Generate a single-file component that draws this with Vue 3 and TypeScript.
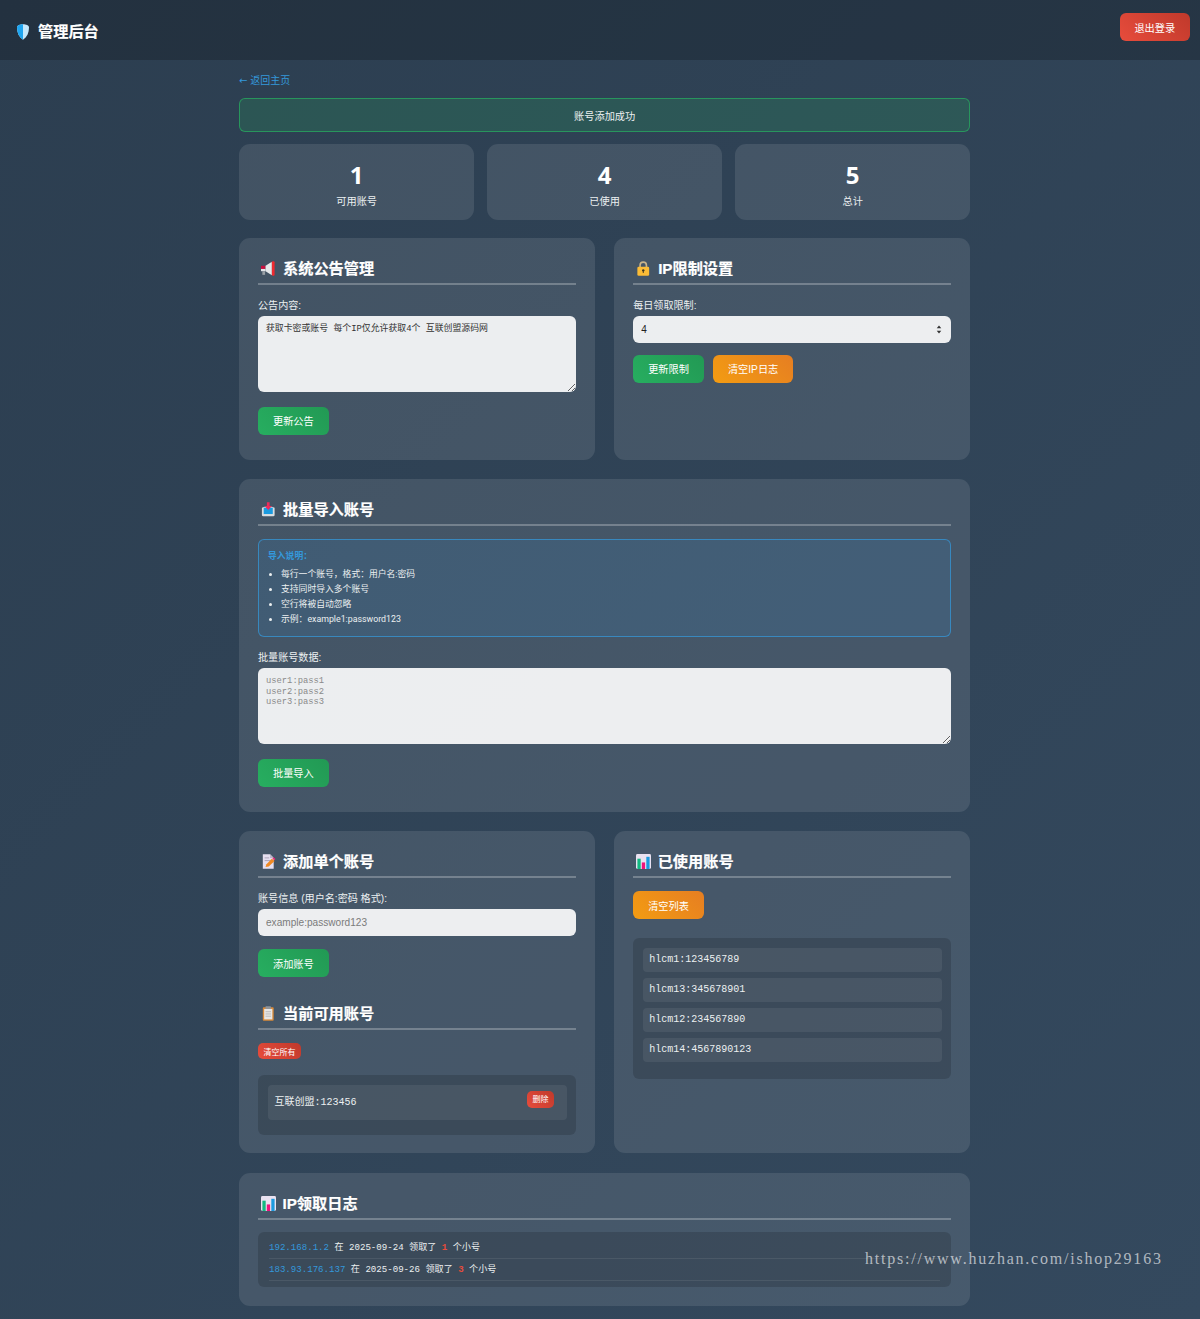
<script setup lang="ts">
const stats = [
  { value: 1, label: '可用账号' },
  { value: 4, label: '已使用' },
  { value: 5, label: '总计' },
]
const used = ['hlcm1:123456789', 'hlcm13:345678901', 'hlcm12:234567890', 'hlcm14:4567890123']
const logs = [
  { ip: '192.168.1.2', date: '2025-09-24', n: 1 },
  { ip: '183.93.176.137', date: '2025-09-26', n: 3 },
]
const notes = ['每行一个账号，格式：用户名:密码', '支持同时导入多个账号', '空行将被自动忽略', '示例：example1:password123']
</script>

<template>
  <div class="page">
    <header class="topbar">
      <h1 class="brand">
        <svg class="brand-icon" viewBox="0 0 12 16"><path d="M6 .3C9 .3 12 1.300 12 3.500 12 9 10 13 6 15.800 2 13 0 9 0 3.500 0 1.300 3 .3 6 .3z" fill="#c4e8fc"/><path d="M6 .3C3 .3 0 1.300 0 3.500 0 9 2 13 6 15.800z" fill="#1fa5f0"/></svg>
        管理后台
      </h1>
      <button class="btn red logout">退出登录</button>
    </header>

    <main class="main">
      <a class="back"><span class="arrow">←</span> 返回主页</a>
      <div class="alert">账号添加成功</div>

      <section class="stats">
        <div v-for="s in stats" :key="s.label" class="stat">
          <div class="stat-value">{{ s.value }}</div>
          <div class="stat-label">{{ s.label }}</div>
        </div>
      </section>

      <div class="two top">
        <section class="card">
          <h2 class="title">
            <svg class="ico" viewBox="0 0 16 16"><rect x="0" y="5" width="5" height="3.500" fill="#c8103f"/><rect x="0" y="8.500" width="5" height="2.500" fill="#e3e5e8"/><rect x="1.500" y="11" width="3" height="4" fill="#9aa0a6"/><path d="M5 5l7-4.500v15L5 11z" fill="#e6e8ea"/><rect x="12" y="0" width="3" height="16" rx="1.200" fill="#ee2a30"/></svg>
            系统公告管理
          </h2>
          <div class="field">
            <label class="label">公告内容:</label>
            <textarea class="control area cn">获取卡密或账号 每个IP仅允许获取4个 互联创盟源码网</textarea>
          </div>
          <button class="btn green">更新公告</button>
        </section>

        <section class="card">
          <h2 class="title">
            <svg class="ico" viewBox="0 0 16 16"><path d="M4.500 7V4.500a3.500 3.500 0 0 1 7 0V7" fill="none" stroke="#c9b38a" stroke-width="1.800"/><rect x="1.500" y="6" width="13" height="10" rx="1.500" fill="#fbbc36"/><circle cx="8" cy="10" r="1.300" fill="#3b3420"/><rect x="7.500" y="10" width="1" height="3" fill="#3b3420"/></svg>
            IP限制设置
          </h2>
          <div class="field">
            <label class="label">每日领取限制:</label>
            <div class="sel-wrap">
              <select class="control sel"><option>4</option></select>
              <svg class="sel-arrows" viewBox="0 0 6 10"><path d="M3 .5L5.500 3.700H.5zM3 9.500L.5 6.300h5z" fill="#333"/></svg>
            </div>
          </div>
          <div class="actions">
            <button class="btn green">更新限制</button>
            <button class="btn orange">清空IP日志</button>
          </div>
        </section>
      </div>

      <section class="card batch">
        <h2 class="title">
          <svg class="ico" viewBox="0 0 16 16"><path d="M1 6l3-1h8l3 1v8a1.500 1.500 0 0 1-1.500 1.500h-11A1.500 1.500 0 0 1 1 14z" fill="#d9dde1"/><rect x="3" y="6" width="10" height="7" fill="#1b9be0"/><path d="M6.500 0h3v4H12L8 8.500 4 4h2.500z" fill="#ee2a5c"/></svg>
          批量导入账号
        </h2>
        <div class="info">
          <strong class="info-title">导入说明：</strong>
          <ul class="info-list">
            <li v-for="n in notes" :key="n">{{ n }}</li>
          </ul>
        </div>
        <div class="field">
          <label class="label">批量账号数据:</label>
          <textarea class="control area mono" placeholder="user1:pass1&#10;user2:pass2&#10;user3:pass3"></textarea>
        </div>
        <button class="btn green">批量导入</button>
      </section>

      <div class="two lower">
        <section class="card">
          <h2 class="title">
            <svg class="ico" viewBox="0 0 16 16"><path d="M2 0h8l4 4v12H2z" fill="#e6dff0"/><path d="M10 0l4 4h-4z" fill="#bdb4c9"/><path d="M4 4h5M4 7h7" stroke="#a89fb5" stroke-width="1"/><path d="M5 14l1-3 6-6 3 2.500-6.500 6z" fill="#f08a24"/><path d="M12.500 4.500l1.200-1.200 2.300 2-1.200 1.400z" fill="#ee2a7b"/></svg>
            添加单个账号
          </h2>
          <div class="field tight">
            <label class="label">账号信息 (用户名:密码 格式):</label>
            <input class="control inp" placeholder="example:password123" />
          </div>
          <button class="btn green">添加账号</button>

          <h2 class="title second">
            <svg class="ico" viewBox="0 0 16 16"><rect x="2" y="1" width="12" height="15" rx="1" fill="#d98b3a"/><rect x="3.500" y="3" width="9" height="11.500" fill="#e8e6e4"/><rect x="5" y="0" width="6" height="3" rx=".6" fill="#8f9499"/><path d="M5 6h6M5 8.500h6M5 11h6" stroke="#b8b8b8"/></svg>
            当前可用账号
          </h2>
          <button class="btn red tiny">清空所有</button>
          <div class="list avail-list">
            <div class="item avail">
              <span>互联创盟:123456</span>
              <button class="btn red del">删除</button>
            </div>
          </div>
        </section>

        <section class="card">
          <h2 class="title">
            <svg class="ico wide" viewBox="0 0 16 16"><rect x="0" y="0" width="16" height="16" rx="1.500" fill="#e9e2f1"/><rect x="1.500" y="5" width="3.500" height="11" fill="#13b982"/><rect x="6.200" y="9" width="3.500" height="7" fill="#f0147c"/><rect x="11" y="3" width="3.500" height="13" fill="#1b9be0"/></svg>
            已使用账号
          </h2>
          <button class="btn orange">清空列表</button>
          <div class="list used">
            <div v-for="u in used" :key="u" class="item">{{ u }}</div>
          </div>
        </section>
      </div>

      <section class="card log-card">
        <h2 class="title">
          <svg class="ico wide" viewBox="0 0 16 16"><rect x="0" y="0" width="16" height="16" rx="1.500" fill="#e9e2f1"/><rect x="1.500" y="5" width="3.500" height="11" fill="#13b982"/><rect x="6.200" y="9" width="3.500" height="7" fill="#f0147c"/><rect x="11" y="3" width="3.500" height="13" fill="#1b9be0"/></svg>
          IP领取日志
        </h2>
        <div class="log">
          <div v-for="l in logs" :key="l.ip" class="log-row">
            <span class="ip">{{ l.ip }}</span> 在 {{ l.date }} 领取了 <span class="num">{{ l.n }}</span> 个小号
          </div>
        </div>
      </section>
    </main>

    <div class="watermark">https://www.huzhan.com/ishop29163</div>
  </div>
</template>

<style>
html, body { margin: 0; background: #2f4359; }
</style>

<style scoped>
* { box-sizing: border-box; }
.page {
  position: relative;
  height: 1319px;
  overflow: hidden;
  background: linear-gradient(135deg, #2c3e50 0%, #34495e 100%);
  color: #ecf0f1;
  font-family: "Liberation Sans", "Noto Sans CJK SC", sans-serif;
  font-size: 10.2px;
}
.topbar {
  height: 60px;
  padding: 0 10px 0 17px;
  background: rgba(0, 0, 0, .2);
  display: flex;
  align-items: flex-start;
  justify-content: space-between;
}
.brand {
  margin: 23px 0 0;
  display: flex;
  align-items: center;
  gap: 9px;
  font-size: 15.2px;
  line-height: 18px;
  color: #fff;
  -webkit-text-stroke: .2px #fff;
}
.brand-icon { width: 12px; height: 16px; }
.btn {
  border: 0;
  border-radius: 6px;
  padding: 0 15px;
  height: 28px;
  color: #fff;
  font: inherit;
  font-size: 10.2px;
  display: inline-block;
}
.green { background: linear-gradient(45deg, #27ae60, #229954); }
.orange { background: linear-gradient(45deg, #f39c12, #e67e22); }
.red { background: linear-gradient(45deg, #e74c3c, #c0392b); }
.logout { margin-top: 13px; width: 70.500px; padding: 0; }
.main { width: 731.300px; margin-left: 239px; }
.back {
  display: block;
  margin-top: 14px;
  height: 24px;
  line-height: 14px;
  color: #3498db;
  font-size: 10px;
}
.arrow { font-family: "DejaVu Sans", sans-serif; }
.alert {
  height: 34px;
  border: 1px solid rgba(39, 174, 96, .72);
  border-radius: 6px;
  background: rgba(39, 174, 96, .2);
  text-align: center;
  line-height: 35px;
  color: #ecf0f1;
}
.stats {
  margin-top: 12px;
  display: grid;
  grid-template-columns: repeat(3, 1fr);
  gap: 12.700px;
}
.stat {
  height: 76px;
  padding-top: 17px;
  border-radius: 11px;
  background: rgba(255, 255, 255, .1);
  text-align: center;
}
.stat-value { font-family: "Open Sans", sans-serif; font-size: 24px; line-height: 28px; font-weight: 700; color: #fff; }
.stat-label { margin-top: 6px; line-height: 14px; color: #ecf0f1; }
.two {
  display: grid;
  grid-template-columns: 1fr 1fr;
  gap: 19px;
}
.top { margin-top: 18px; }
.lower { margin-top: 19.500px; }
.card {
  padding: 19px;
  border-radius: 11px;
  background: rgba(255, 255, 255, .1);
}
.top .card { min-height: 222px; }
.batch { margin-top: 19px; padding-bottom: 25px; }
.lower .card { padding-bottom: 18px; }
.log-card { margin-top: 20px; }
.log-card .title { margin-bottom: 12px; }
.title {
  margin: 0 0 13px;
  height: 28px;
  display: flex;
  align-items: flex-start;
  gap: 7.500px;
  border-bottom: 2px solid rgba(255, 255, 255, .26);
  font-size: 15.200px;
  line-height: 24px;
  color: #fff;
  -webkit-text-stroke: .2px #fff;
}
.ico { width: 14.500px; height: 15px; margin: 4px 0 0 3px; flex: none; }
.wide { width: 15px; margin-left: 3px; margin-right: -1px; }
.second { margin-top: 25px; }
.field { margin-bottom: 15.200px; }
.tight { margin-bottom: 13px; }
.label { display: block; padding-top: 1px; margin-bottom: 3px; line-height: 14px; font-size: 10.100px; color: #ecf0f1; }
.control {
  display: block;
  width: 100%;
  border: 0;
  border-radius: 6px;
  background: rgba(255, 255, 255, .9);
  color: #2c3e50;
  outline: 0;
}
.area { height: 75.500px; padding: 8px; resize: vertical; }
.cn { font-family: "Liberation Mono", "Noto Sans CJK SC", monospace; font-size: 8.900px; line-height: 11px; color: #333; }
.mono { font-family: "Liberation Mono", monospace; font-size: 8.800px; line-height: 10.500px; }
.mono::placeholder { color: #8a8a8a; }
.sel-wrap { position: relative; }
.sel { height: 26.500px; padding: 0 8px; appearance: none; font-family: inherit; font-size: 10px; color: #222; }
.sel-arrows { position: absolute; right: 9px; top: 9px; width: 6px; height: 9px; }
.inp { height: 27px; padding: 0 8px; font-family: inherit; font-size: 10.100px; }
.inp::placeholder { color: #7b7b7b; }
.actions { display: flex; gap: 9px; margin-top: -3px; }
.tiny { display: block; height: 16px; width: 43px; padding: 0; font-size: 8px; border-radius: 5px; }
.list {
  margin-top: 16px;
  padding: 10px 9.500px;
  border-radius: 6px;
  background: rgba(0, 0, 0, .15);
}
.avail-list { padding-bottom: 15.500px; padding-top: 9.500px; }
.used { margin-top: 19px; padding-bottom: 16.500px; }
.item {
  height: 24px;
  padding: 0 6.500px;
  margin-bottom: 6px;
  border-radius: 4px;
  background: rgba(255, 255, 255, .07);
  font-family: "Liberation Mono", "Noto Sans CJK SC", monospace;
  font-size: 10px;
  line-height: 23px;
  color: #ecf0f1;
}
.item:last-child { margin-bottom: 0; }
.avail {
  height: 35px;
  padding: 0 12.500px 0 7px;
  display: flex;
  justify-content: space-between;
  line-height: 35px;
}
.del { height: 17px; width: 27.500px; padding: 0; margin-top: 6px; border-radius: 5px; font-size: 8px; line-height: 17px; }
.log {
  padding: 5px 11px 6px;
  border-radius: 6px;
  background: rgba(0, 0, 0, .15);
  font-family: "Liberation Mono", "Noto Sans CJK SC", monospace;
  font-size: 9.100px;
  color: #ecf0f1;
}
.log-row { height: 22px; line-height: 21.500px; border-bottom: 1px solid rgba(255, 255, 255, .08); }
.ip { color: #3498db; }
.num { color: #e74c3c; font-weight: 700; }
.info {
  height: 98px;
  padding: 10px 9px;
  margin-bottom: 13px;
  border: 1px solid rgba(52, 152, 219, .72);
  border-radius: 6px;
  background: rgba(52, 152, 219, .12);
  font-family: Roboto, "Noto Sans CJK SC", sans-serif;
  font-size: 8.800px;
}
.info-title { display: block; line-height: 12px; color: #3498db; }
.info-list { margin: 5px 0 0; padding: 0 0 0 13px; }
.info-list li { line-height: 15px; color: #ecf0f1; }
.watermark {
  position: absolute;
  left: 865px;
  top: 1250px;
  font-family: "Liberation Serif", serif;
  font-size: 16px;
  letter-spacing: 1.780px;
  line-height: 18px;
  white-space: nowrap;
  color: rgba(255, 255, 255, .62);
}
</style>
